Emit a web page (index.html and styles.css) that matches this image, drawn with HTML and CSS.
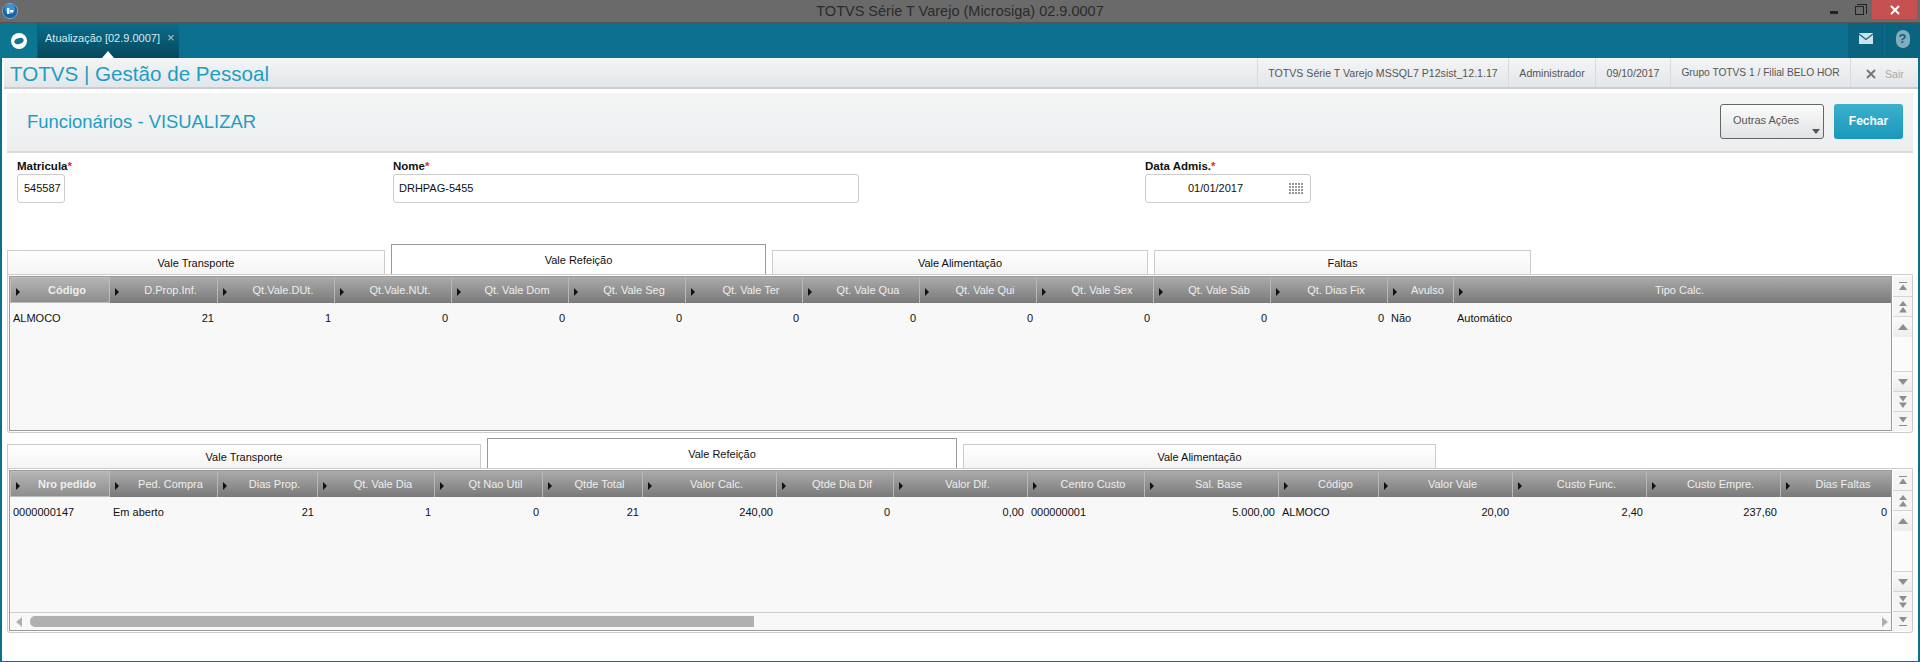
FILE: index.html
```html
<!DOCTYPE html>
<html lang="pt">
<head>
<meta charset="utf-8">
<title>TOTVS Série T Varejo (Microsiga) 02.9.0007</title>
<link rel="stylesheet" href="styles.css">
</head>
<body>
<svg class="defs" aria-hidden="true">
  <symbol id="s-top" viewBox="0 0 10 10"><rect x="1" y="0" width="8" height="1"/><polygon points="5,2.5 9,8 1,8"/></symbol>
  <symbol id="s-dup" viewBox="0 0 10 12"><polygon points="5,0 9,5 1,5"/><polygon points="5,6 9,11.5 1,11.5"/></symbol>
  <symbol id="s-up" viewBox="0 0 10 6"><polygon points="5,0 10,6 0,6"/></symbol>
  <symbol id="s-down" viewBox="0 0 10 6"><polygon points="0,0 10,0 5,6"/></symbol>
  <symbol id="s-ddn" viewBox="0 0 10 12"><polygon points="1,0 9,0 5,5.5"/><polygon points="1,6.5 9,6.5 5,12"/></symbol>
  <symbol id="s-bot" viewBox="0 0 10 10"><polygon points="1,0 9,0 5,5.5"/><rect x="1" y="8" width="8" height="1"/></symbol>
  <pattern id="cal" width="3" height="3" patternUnits="userSpaceOnUse"><rect width="2" height="2" fill="#9a9a9a"/></pattern>
</svg>

<header class="titlebar">
  <svg class="app-orb" viewBox="0 0 16 16" width="16" height="16">
    <circle cx="8" cy="8" r="7.8" fill="#1a62a8"/>
    <circle cx="8" cy="6" r="5" fill="#3f93d6"/>
    <circle cx="8" cy="8" r="7.6" fill="none" stroke="#c4c9cd" stroke-width=".6"/>
    <path d="M5 5h2.4v6H5zM8 7h3.4v2.4H8z" fill="#e8f3fb"/>
  </svg>
  <div class="title-text">TOTVS Série T Varejo (Microsiga) 02.9.0007</div>
  <div class="win-controls">
    <span class="win-min"></span>
    <span class="win-max"></span>
    <span class="win-close">
      <svg viewBox="0 0 10 10" width="10" height="10"><path d="M1 1l8 8M9 1l-8 8" stroke="#fff" stroke-width="2"/></svg>
    </span>
  </div>
</header>

<nav class="topnav">
  <div class="nav-home">
    <svg viewBox="0 0 16 16" width="16" height="16">
      <circle cx="8" cy="8" r="8" fill="#fff"/>
      <ellipse cx="8" cy="8" rx="4.800" ry="2.900" transform="rotate(-18 8 8)" fill="#0c7590"/>
    </svg>
  </div>
  <div class="nav-tab"><span class="nav-label">Atualização [02.9.0007]</span><span class="nav-x">×</span></div>
  <div class="nav-spacer"></div>
  <div class="nav-tile">
    <svg viewBox="0 0 14 11" width="14" height="11"><rect width="14" height="11" fill="#cfe2e9"/><path d="M0 1l7 5.500L14 1" fill="none" stroke="#0a6580" stroke-width="1.200"/></svg>
  </div>
  <div class="nav-tile nav-help"><span class="help-q">?</span></div>
</nav>

<main class="workspace">
  <div class="infobar">
    <h1 class="brand">TOTVS | Gestão de Pessoal</h1>
    <div class="info-item info-env">TOTVS Série T Varejo MSSQL7 P12sist_12.1.17</div>
    <div class="info-item info-user">Administrador</div>
    <div class="info-item info-date">09/10/2017</div>
    <div class="info-item info-group">Grupo TOTVS 1 / Filial BELO HOR</div>
    <div class="info-item info-exit">
      <svg viewBox="0 0 10 10" width="10" height="10"><path d="M1 1l8 8M9 1l-8 8" stroke="#777" stroke-width="2"/></svg>
      <span>Sair</span>
    </div>
  </div>

  <div class="subhead">
    <h2 class="page-title">Funcionários - VISUALIZAR</h2>
    <div class="actions">
      <button class="btn-more"><span>Outras Ações</span><i class="btn-caret"></i></button>
      <button class="btn-close">Fechar</button>
    </div>
  </div>

  <form class="fields">
    <div class="field">
      <label class="field-label">Matricula<b>*</b></label>
      <div class="input input-mat">545587</div>
    </div>
    <div class="field">
      <label class="field-label">Nome<b>*</b></label>
      <div class="input input-name">DRHPAG-5455</div>
    </div>
    <div class="field">
      <label class="field-label">Data Admis.<b>*</b></label>
      <div class="input input-date">
        <span>01/01/2017</span>
        <svg viewBox="0 0 15 12" width="15" height="12"><rect width="15" height="12" fill="url(#cal)"/></svg>
      </div>
    </div>
  </form>

  <section class="group">
    <div class="tabs">
      <div class="tab tab-a1">Vale Transporte</div>
      <div class="tab tab-a2 active">Vale Refeição</div>
      <div class="tab tab-a3">Vale Alimentação</div>
      <div class="tab tab-a4">Faltas</div>
    </div>
    <div class="panel panel-top">
      <div class="table">
        <div class="row head cols-top">
          <div class="th first"><span>Código</span></div>
          <div class="th"><span>D.Prop.Inf.</span></div>
          <div class="th"><span>Qt.Vale.DUt.</span></div>
          <div class="th"><span>Qt.Vale.NUt.</span></div>
          <div class="th"><span>Qt. Vale Dom</span></div>
          <div class="th"><span>Qt. Vale Seg</span></div>
          <div class="th"><span>Qt. Vale Ter</span></div>
          <div class="th"><span>Qt. Vale Qua</span></div>
          <div class="th"><span>Qt. Vale Qui</span></div>
          <div class="th"><span>Qt. Vale Sex</span></div>
          <div class="th"><span>Qt. Vale Sáb</span></div>
          <div class="th"><span>Qt. Dias Fix</span></div>
          <div class="th"><span>Avulso</span></div>
          <div class="th"><span>Tipo Calc.</span></div>
        </div>
        <div class="row body cols-top">
          <div class="td">ALMOCO</div>
          <div class="td num">21</div>
          <div class="td num">1</div>
          <div class="td num">0</div>
          <div class="td num">0</div>
          <div class="td num">0</div>
          <div class="td num">0</div>
          <div class="td num">0</div>
          <div class="td num">0</div>
          <div class="td num">0</div>
          <div class="td num">0</div>
          <div class="td num">0</div>
          <div class="td">Não</div>
          <div class="td">Automático</div>
        </div>
      </div>
      <div class="vscroll">
        <div class="vs-group">
          <div class="vs-btn"><svg width="10" height="10"><use href="#s-top"/></svg></div>
          <div class="vs-btn"><svg width="10" height="12"><use href="#s-dup"/></svg></div>
          <div class="vs-btn vs-soft"><svg width="10" height="6"><use href="#s-up"/></svg></div>
        </div>
        <div class="vs-group">
          <div class="vs-btn vs-soft"><svg width="10" height="6"><use href="#s-down"/></svg></div>
          <div class="vs-btn"><svg width="10" height="12"><use href="#s-ddn"/></svg></div>
          <div class="vs-btn"><svg width="10" height="10"><use href="#s-bot"/></svg></div>
        </div>
      </div>
    </div>
  </section>

  <section class="group group-2">
    <div class="tabs">
      <div class="tab tab-b1">Vale Transporte</div>
      <div class="tab tab-b2 active">Vale Refeição</div>
      <div class="tab tab-b3">Vale Alimentação</div>
    </div>
    <div class="panel panel-bottom">
      <div class="table">
        <div class="row head cols-bottom">
          <div class="th first"><span>Nro pedido</span></div>
          <div class="th"><span>Ped. Compra</span></div>
          <div class="th"><span>Dias Prop.</span></div>
          <div class="th"><span>Qt. Vale Dia</span></div>
          <div class="th"><span>Qt Nao Util</span></div>
          <div class="th"><span>Qtde Total</span></div>
          <div class="th"><span>Valor Calc.</span></div>
          <div class="th"><span>Qtde Dia Dif</span></div>
          <div class="th"><span>Valor Dif.</span></div>
          <div class="th"><span>Centro Custo</span></div>
          <div class="th"><span>Sal. Base</span></div>
          <div class="th"><span>Código</span></div>
          <div class="th"><span>Valor Vale</span></div>
          <div class="th"><span>Custo Func.</span></div>
          <div class="th"><span>Custo Empre.</span></div>
          <div class="th"><span>Dias Faltas</span></div>
        </div>
        <div class="row body cols-bottom">
          <div class="td">0000000147</div>
          <div class="td">Em aberto</div>
          <div class="td num">21</div>
          <div class="td num">1</div>
          <div class="td num">0</div>
          <div class="td num">21</div>
          <div class="td num">240,00</div>
          <div class="td num">0</div>
          <div class="td num">0,00</div>
          <div class="td">000000001</div>
          <div class="td num">5.000,00</div>
          <div class="td">ALMOCO</div>
          <div class="td num">20,00</div>
          <div class="td num">2,40</div>
          <div class="td num">237,60</div>
          <div class="td num">0</div>
        </div>
        <div class="hscroll">
          <svg class="hs-arrow" viewBox="0 0 6 10" width="6" height="10"><polygon points="6,0 6,10 0,5"/></svg>
          <div class="hs-track"><div class="hs-thumb"></div></div>
          <svg class="hs-arrow" viewBox="0 0 6 10" width="6" height="10"><polygon points="0,0 6,5 0,10"/></svg>
        </div>
      </div>
      <div class="vscroll">
        <div class="vs-group">
          <div class="vs-btn"><svg width="10" height="10"><use href="#s-top"/></svg></div>
          <div class="vs-btn"><svg width="10" height="12"><use href="#s-dup"/></svg></div>
          <div class="vs-btn vs-soft"><svg width="10" height="6"><use href="#s-up"/></svg></div>
        </div>
        <div class="vs-group">
          <div class="vs-btn vs-soft"><svg width="10" height="6"><use href="#s-down"/></svg></div>
          <div class="vs-btn"><svg width="10" height="12"><use href="#s-ddn"/></svg></div>
          <div class="vs-btn"><svg width="10" height="10"><use href="#s-bot"/></svg></div>
        </div>
      </div>
    </div>
  </section>
</main>
</body>
</html>
```

FILE: styles.css
```css
* { box-sizing: border-box; }
html, body { margin: 0; padding: 0; height: 662px; overflow: hidden; background: #fff; }
body { font-family: "Liberation Sans", Arial, sans-serif; font-size: 11px; color: #111; }
.defs { display: block; width: 0; height: 0; }

/* window title */
.titlebar { height: 23px; background: #6a6a6a; border-bottom: 1px solid #555; display: grid; grid-template-columns: 1fr auto 1fr; align-items: start; }
.app-orb { margin: 3px 0 0 2px; }
.title-text { font-size: 14.500px; line-height: 22px; color: #2b2b2b; }
.win-controls { display: flex; justify-content: flex-end; align-items: flex-start; padding-right: 3px; }
.win-min { width: 8px; height: 3px; background: #222; margin: 11px 17px 0 0; }
.win-max { width: 9px; height: 9px; border: 1px solid #222; margin: 6px 8px 0 0; position: relative; }
.win-max::before { content: ""; position: absolute; left: 1px; top: -3px; width: 9px; height: 9px; border: solid #222; border-width: 1px 1px 0 0; }
.win-close { width: 45px; height: 19px; background: #c75050; display: flex; align-items: center; justify-content: center; }

/* teal nav */
.topnav { height: 35px; background: #0b708f; display: flex; }
.nav-home { width: 38px; background: #0c7590; border-right: 1px solid #0a5f78; display: flex; align-items: center; justify-content: center; }
.nav-tab { width: 141px; position: relative; background: linear-gradient(#0a6d8b, #06485c); color: #dbe9ee; font-size: 11px; display: flex; align-items: center; padding: 0 0 6px 7px; gap: 7px; white-space: nowrap; }
.nav-tab::after { content: ""; position: absolute; left: 64px; bottom: 0; border: 6px solid transparent; border-top: 0; border-bottom: 7px solid #fff; }
.nav-x { font-size: 13px; color: #a9c6d0; }
.nav-spacer { flex: 1; }
.nav-tile { width: 36px; margin-left: 1px; background: #0a637f; display: flex; align-items: center; justify-content: center; padding-bottom: 4px; }
.nav-help { width: 35px; }
.help-q { width: 14px; height: 18px; border-radius: 7px; background: #83adbd; color: #0a637f; font: bold 13px/18px "Liberation Sans", sans-serif; text-align: center; }

/* workspace */
.workspace { height: 604px; border: solid #0b708f; border-width: 0 2px 1px; }

.infobar { height: 31px; margin-left: 2px; background: linear-gradient(#f3f5f6, #e3e6e9); border-bottom: 2px solid #c9cbce; display: flex; align-items: center; }
.brand { flex: 1; margin: 0; padding: 3px 0 0 6px; font-size: 20.600px; font-weight: normal; color: #1c9ec3; line-height: 26px; }
.info-item { flex: none; height: 29px; line-height: 30px; text-align: center; border-left: 1px solid #d8dadc; color: #555; font-size: 10.600px; white-space: nowrap; }
.info-env { width: 251px; }
.info-user { width: 87px; }
.info-date { width: 75px; }
.info-group { width: 180px; font-size: 10.200px; }
.info-exit { width: 68px; display: flex; align-items: center; gap: 9px; padding: 2px 0 0 15px; color: #aaa; }

.subhead { height: 60px; margin: 4px 5px 0; background: linear-gradient(#f4f5f5, #eceef0); border-bottom: 2px solid #dadada; display: flex; align-items: center; justify-content: space-between; padding: 0 10px 0 20px; }
.page-title { margin: 0; font-size: 18.400px; font-weight: normal; color: #1c9ec3; }
.actions { display: flex; gap: 10px; padding-bottom: 2px; }
.btn-more { width: 104px; height: 35px; border: 1px solid #666; border-radius: 3px; background: linear-gradient(#fbfbfb, #e2e3e4); color: #555; font: 11px "Liberation Sans", sans-serif; display: flex; justify-content: space-between; align-items: flex-end; padding: 0 3px 4px 12px; }
.btn-more span { align-self: center; padding-top: 1px; }
.btn-caret { border: 4px solid transparent; border-bottom: 0; border-top: 5px solid #555; }
.btn-close { width: 69px; height: 35px; border: 0; border-radius: 3px; background: linear-gradient(#3bb0cc, #1a98bb); color: #fff; font: bold 12px "Liberation Sans", sans-serif; }

/* form */
.fields { height: 91px; padding: 6px 0 0 15px; display: grid; grid-template-columns: 376px 752px 1fr; align-items: start; }
.field-label { display: block; font-weight: bold; font-size: 11.500px; line-height: 15px; color: #111; }
.field-label b { color: #e22; font-weight: bold; }
.input { height: 29px; border: 1px solid #ccc; border-radius: 3px; line-height: 27px; padding-left: 5px; background: #fff; font-size: 11px; }
.input-mat { width: 48px; padding-left: 6px; }
.input-name { width: 466px; }
.input-date { width: 166px; padding: 0 6px 0 42px; display: flex; justify-content: space-between; align-items: center; }

/* tabs */
.tabs { height: 30px; display: flex; align-items: flex-end; gap: 6px; margin-left: 5px; }
.tab { height: 24px; border: 1px solid #ccc; border-bottom: 0; background: linear-gradient(#fff, #f4f4f4); text-align: center; line-height: 24px; font-size: 11px; color: #111; }
.tab.active { height: 30px; background: #fff; border-color: #999; line-height: 30px; }
.tab-a1 { width: 378px; } .tab-a2 { width: 375px; } .tab-a3 { width: 376px; } .tab-a4 { width: 377px; }
.tab-b1 { width: 474px; } .tab-b2 { width: 470px; } .tab-b3 { width: 473px; }

.group-2 { margin-top: 5px; }
.panel { margin: 0 5px; border: 1px solid #ccc; border-radius: 0 0 3px 3px; padding: 1px 0 1px 1px; display: flex; gap: 1px; }
.panel-top { height: 159px; }
.panel-bottom { height: 165px; }

.table { flex: 1; min-width: 0; border: 1px solid #9a9a9a; background: #f8f8f8; display: flex; flex-direction: column; }
.row { display: grid; }
.cols-top { grid-template-columns: 100px 108px 117px 117px 117px 117px 117px 117px 117px 117px 117px 117px 66px 1fr; }
.cols-bottom { grid-template-columns: 100px 108px 100px 117px 108px 100px 134px 117px 134px 117px 134px 100px 134px 134px 134px 1fr; }
.head { height: 26px; }
.body { flex: 1; align-content: start; }
.th { background: linear-gradient(#ababab, #797979); border-right: 1px solid #b8b8b8; color: #eee; font-size: 11px; display: flex; align-items: center; padding-left: 5px; white-space: nowrap; min-width: 0; }
.th:last-child { border-right: 0; }
.th::before { content: ""; border: 4px solid transparent; border-right: 0; border-left: 4px solid #111; flex: none; margin-top: 3px; }
.th span { flex: 1; text-align: center; padding-left: 5px; }
.th.first { background: linear-gradient(#b4b4b4, #8e8e8e); border: 1px solid #bcbcbc; font-weight: bold; }
.td { padding: 8px 3px 0; line-height: 14px; font-size: 11px; color: #111; white-space: nowrap; }
.td.num { text-align: right; padding-right: 4px; }

.hscroll { height: 18px; border-top: 1px solid #ccc; display: flex; align-items: center; padding: 0 3px 0 6px; gap: 6px; background: #f8f8f8; }
.hs-arrow { fill: #b0b0b0; flex: none; }
.hs-track { flex: 1; }
.hs-thumb { width: 724px; height: 11px; background: #b0b0b0; border-radius: 5px 0 0 5px; margin-left: 2px; }

.vscroll { width: 19px; display: flex; flex-direction: column; justify-content: space-between; background: #fbfbfb; }
.vs-group:first-child { margin-top: 1px; }
.vs-btn { height: 20px; border-bottom: 1px solid #d4d4d4; background: #f5f5f5; display: flex; align-items: center; justify-content: center; fill: #8e8e8e; }
.vs-group:last-child .vs-btn { border-bottom: 0; border-top: 1px solid #d4d4d4; }
.vs-soft { background: linear-gradient(#fafafa, #eceded); }
.vs-group .vs-soft { border-bottom: 0; }
```
